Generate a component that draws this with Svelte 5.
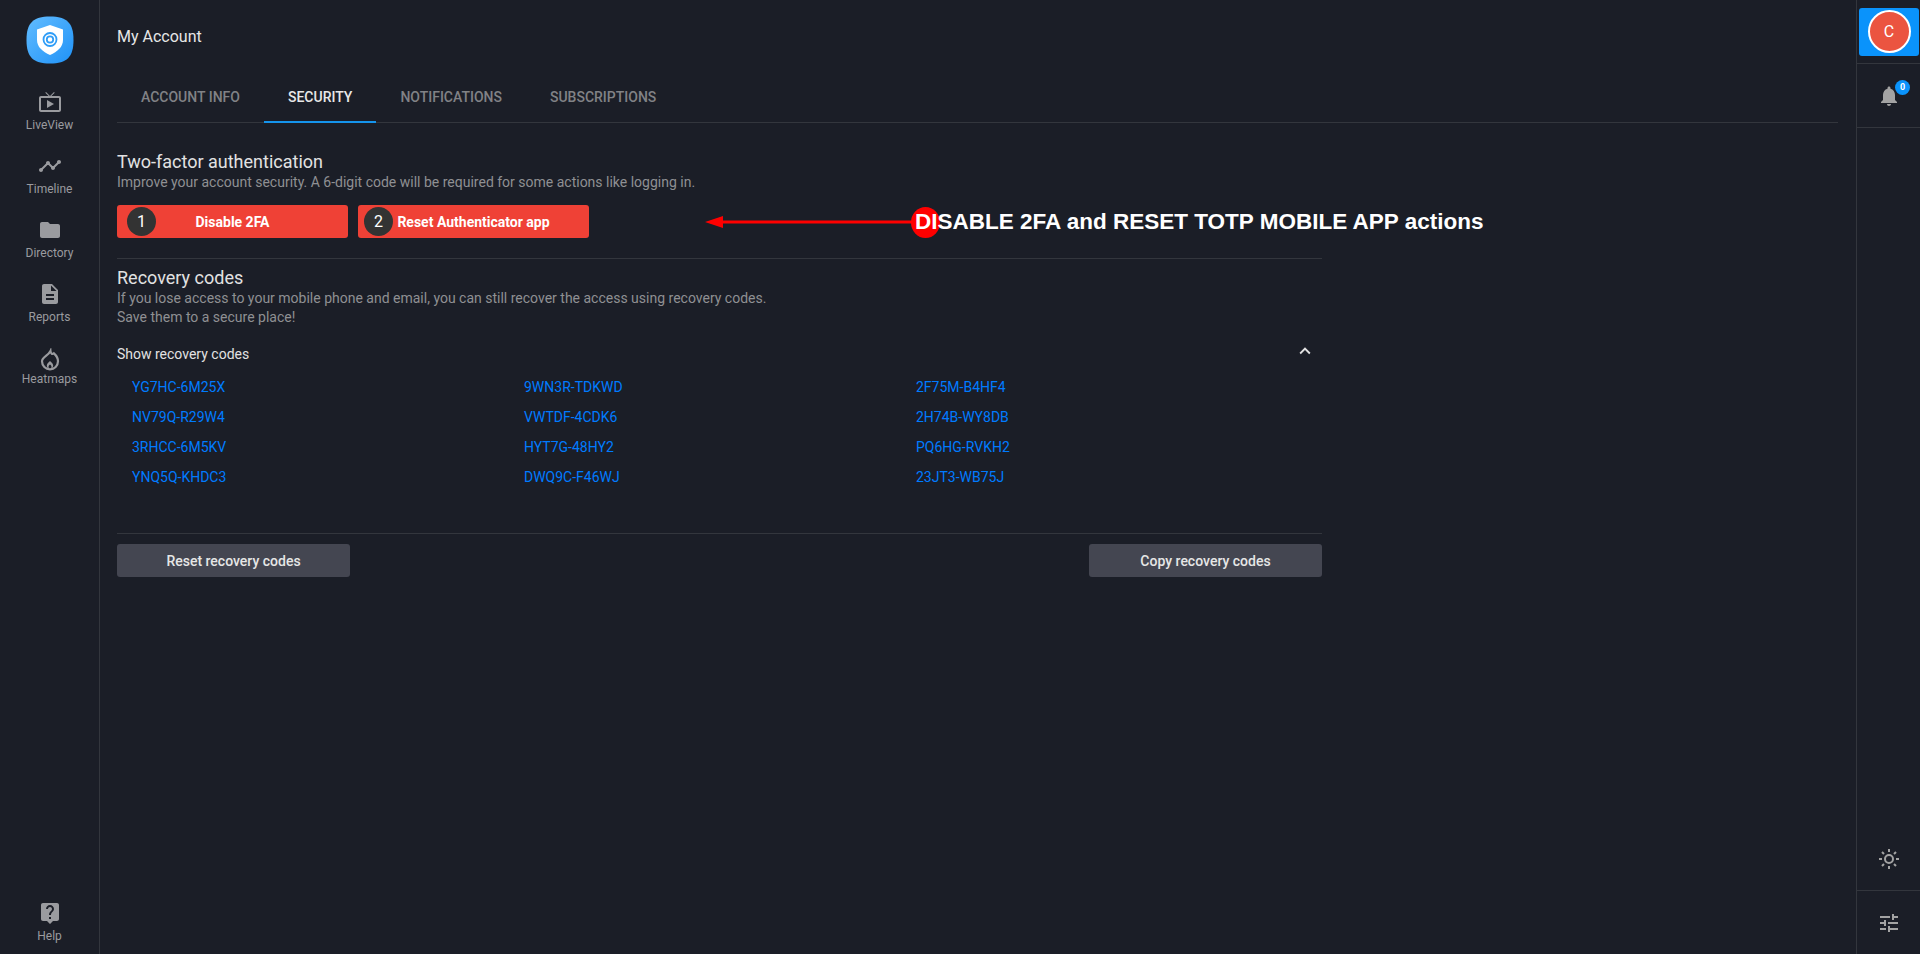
<script lang="ts">
    const nav = [
        { label: 'LiveView', d: 'M21 6h-7.59l3.29-3.29L16 2l-4 4-4-4-.71.71L10.59 6H3c-1.1 0-2 .89-2 2v12c0 1.1.9 2 2 2h18c1.1 0 2-.9 2-2V8c0-1.11-.9-2-2-2zm0 14H3V8h18v12zM9 10v8l7-4z' },
        { label: 'Timeline', d: 'M23 8c0 1.1-.9 2-2 2-.18 0-.35-.02-.51-.07l-3.56 3.55c.05.16.07.34.07.52 0 1.1-.9 2-2 2s-2-.9-2-2c0-.18.02-.36.07-.52l-2.55-2.55c-.16.05-.34.07-.52.07s-.36-.02-.52-.07l-4.55 4.56c.05.16.07.33.07.51 0 1.1-.9 2-2 2s-2-.9-2-2 .9-2 2-2c.18 0 .35.02.51.07l4.56-4.55C8.02 9.36 8 9.18 8 9c0-1.1.9-2 2-2s2 .9 2 2c0 .18-.02.36-.07.52l2.55 2.55c.16-.05.34-.07.52-.07s.36.02.52.07l3.55-3.56C19.02 8.35 19 8.18 19 8c0-1.1.9-2 2-2s2 .9 2 2z' },
        { label: 'Directory', d: 'M10 4H4c-1.1 0-1.99.9-1.99 2L2 18c0 1.1.9 2 2 2h16c1.1 0 2-.9 2-2V8c0-1.1-.9-2-2-2h-8l-2-2z' },
        { label: 'Reports', d: 'M14 2H6c-1.1 0-1.99.9-1.99 2L4 20c0 1.1.89 2 1.99 2H18c1.1 0 2-.9 2-2V8l-6-6zm2 16H8v-2h8v2zm0-4H8v-2h8v2zm-3-5V3.5L18.5 9H13z' },
    ]

    const codes = [
        'YG7HC-6M25X', '9WN3R-TDKWD', '2F75M-B4HF4',
        'NV79Q-R29W4', 'VWTDF-4CDK6', '2H74B-WY8DB',
        '3RHCC-6M5KV', 'HYT7G-48HY2', 'PQ6HG-RVKH2',
        'YNQ5Q-KHDC3', 'DWQ9C-F46WJ', '23JT3-WB75J',
    ]

    const tabs = ['Account info', 'Security', 'Notifications', 'Subscriptions']
    let active = $state('Security')
    let showCodes = $state(true)
</script>

<div class="page">
    <aside class="left">
        <div class="logo">
            <svg viewBox="0 0 48 48" width="48" height="48">
                <defs>
                    <linearGradient id="lg" x1="0" y1="0" x2="1" y2="1">
                        <stop offset="0" stop-color="#62bcff" />
                        <stop offset="1" stop-color="#1f92f7" />
                    </linearGradient>
                </defs>
                <path d="M24 .5C41 .5 47.500 7 47.500 24S41 47.500 24 47.500.5 41 .5 24 7 .5 24 .5z" fill="url(#lg)" />
                <path d="M24 9l13 4.500v10.500c0 7-5.500 11.500-13 15-7.500-3.500-13-8-13-15V13.500z" fill="#fff" />
                <circle cx="24" cy="23.500" r="6.500" fill="none" stroke="#2f9df7" stroke-width="1.800" />
                <circle cx="24" cy="23.500" r="3.200" fill="none" stroke="#2f9df7" stroke-width="1.800" />
            </svg>
        </div>
        <nav>
            {#each nav as item}
                <a class="nav-item" href="#top">
                    <span class="nav-icon">
                        <svg viewBox="0 0 24 24" width="24" height="24"><path d={item.d} /></svg>
                    </span>
                    <span>{item.label}</span>
                </a>
            {/each}
            <a class="nav-item heat" href="#top">
                <span class="nav-icon">
                    <svg viewBox="0 0 24 24" width="24" height="24">
                        <path class="line" d="M12.500 3c.3 2.800 1.900 3.700 3.400 2.300 2.500 2.200 4.100 5 4.100 8a8 8 0 0 1-16 0c0-4.400 6.300-5.600 8.500-10.300z" />
                        <path d="M12 13c1.900 1.500 3.200 3 3.200 4.600 0 .9-.3 1.700-.8 2.300h-1.200c.2-.4.3-.8.300-1.200 0-.9-.7-1.700-1.500-2.300-.8.600-1.500 1.400-1.500 2.300 0 .4.100.8.300 1.200H9.600c-.5-.6-.8-1.400-.8-2.300 0-1.600 1.300-3.100 3.200-4.600z" />
                    </svg>
                </span>
                <span>Heatmaps</span>
            </a>
        </nav>
        <a class="nav-item help" href="#top">
            <span class="nav-icon">
                <svg viewBox="0 0 24 24" width="24" height="24"><path d="M19 2H5c-1.110 0-2 .9-2 2v14c0 1.100.89 2 2 2h4l3 3 3-3h4c1.100 0 2-.9 2-2V4c0-1.100-.9-2-2-2zm-6 16h-2v-2h2v2zm2.070-7.750l-.9.92C13.450 11.900 13 12.500 13 14h-2v-.5c0-1.100.45-2.100 1.170-2.830l1.240-1.260c.37-.36.59-.86.59-1.410 0-1.100-.9-2-2-2s-2 .9-2 2H8c0-2.210 1.790-4 4-4s4 1.790 4 4c0 .88-.36 1.680-.93 2.250z" /></svg>
            </span>
            <span>Help</span>
        </a>
    </aside>

    <main>
        <h1>My Account</h1>

        <div class="tabs">
            {#each tabs as tab}
                <button class="tab" class:active={tab === active} onclick={() => (active = tab)}>{tab}</button>
            {/each}
        </div>

        <div class="content">
            <section class="twofa">
                <h2>Two-factor authentication</h2>
                <p>Improve your account security. A 6-digit code will be required for some actions like logging in.</p>
                <div class="actions">
                    <button class="danger">
                        <span class="step first">1</span>
                        Disable 2FA
                    </button>
                    <button class="danger">
                        <span class="step">2</span>
                        Reset Authenticator app
                    </button>
                </div>
            </section>

            <section class="recovery">
                <h2>Recovery codes</h2>
                <p>If you lose access to your mobile phone and email, you can still recover the access using recovery codes.<br />Save them to a secure place!</p>

                <button class="toggle" onclick={() => (showCodes = !showCodes)}>
                    <span>Show recovery codes</span>
                    <svg viewBox="0 0 24 24" width="22" height="22" class:flip={!showCodes}><path d="M7.410 15.410 12 10.830l4.590 4.580L18 14l-6-6-6 6z" /></svg>
                </button>

                {#if showCodes}
                    <div class="codes">
                        {#each codes as code}
                            <span>{code}</span>
                        {/each}
                    </div>
                {/if}
            </section>

            <div class="footer">
                <button class="neutral">Reset recovery codes</button>
                <button class="neutral">Copy recovery codes</button>
            </div>
        </div>

        <div class="note">
            <svg viewBox="0 0 210 14" width="210" height="14"><path d="M0 7 18 1v4.500h192v3H18V13z" /></svg>
            <span class="note-text"><span class="dot"></span>DISABLE 2FA and RESET TOTP MOBILE APP actions</span>
        </div>
    </main>

    <aside class="right">
        <div class="slot avatar-slot">
            <div class="avatar-bg"><span class="avatar">C</span></div>
        </div>
        <div class="slot bell">
            <svg viewBox="0 0 24 24" width="24" height="24"><path d="M12 22c1.100 0 2-.9 2-2h-4c0 1.100.89 2 2 2zm6-6v-5c0-3.070-1.640-5.640-4.500-6.320V4c0-.83-.67-1.500-1.500-1.500s-1.500.67-1.500 1.500v.68C7.630 5.360 6 7.920 6 11v5l-2 2v1h16v-1l-2-2z" /></svg>
            <span class="badge">0</span>
        </div>
        <div class="spacer"></div>
        <div class="slot sun">
            <svg viewBox="0 0 24 24" width="24" height="24">
                <circle cx="12" cy="12" r="4" />
                <path d="M12 2v3M12 19v3M2 12h3M19 12h3M5 5l2 2M17 17l2 2M5 19l2-2M17 7l2-2" />
            </svg>
        </div>
        <div class="slot tune">
            <svg viewBox="0 0 24 24" width="24" height="24"><path d="M3 17v2h6v-2H3zM3 5v2h10V5H3zm10 16v-2h8v-2h-8v-2h-2v6h2zM7 9v2H3v2h4v2h2V9H7zm14 4v-2H11v2h10zm-6-4h2V7h4V5h-4V3h-2v6z" /></svg>
        </div>
    </aside>
</div>

<style>
    :global(body) {
        background: #1b1e27;
        font-family: Roboto, "Liberation Sans", sans-serif;
    }

    button {
        font-family: inherit;
        border: 0;
        cursor: pointer;
    }

    .page {
        display: flex;
        height: 954px;
        overflow: hidden;
        background: #1b1e27;
    }

    .left {
        width: 99px;
        flex: none;
        border-right: 1px solid #33363d;
        display: flex;
        flex-direction: column;
        align-items: center;
        padding-top: 16px;
        box-sizing: content-box;
    }

    .logo {
        height: 48px;
        margin-bottom: 22px;
    }

    .logo svg {
        display: block;
    }

    nav {
        display: flex;
        flex-direction: column;
        flex: 1;
        width: 100%;
    }

    .nav-item {
        display: flex;
        flex-direction: column;
        align-items: center;
        height: 64px;
        color: #9a9b9f;
        font-size: 12px;
        line-height: 16px;
        text-decoration: none;
    }

    .nav-icon {
        height: 32px;
        display: flex;
        align-items: center;
        justify-content: center;
        margin-bottom: -1px;
    }

    .nav-icon svg {
        fill: #9a9b9f;
    }

    .nav-icon .line {
        fill: none;
        stroke: #9a9b9f;
        stroke-width: 2.200;
    }

    .heat {
        margin-top: 2px;
    }

    .heat .nav-icon {
        margin-bottom: -5px;
    }

    .help {
        height: 48px;
        margin-bottom: 9px;
    }

    main {
        flex: 1;
        min-width: 0;
        padding: 0 18px 0 17px;
        position: relative;
    }

    h1 {
        margin: 0;
        font-size: 16px;
        font-weight: 400;
        line-height: 19px;
        color: #e6e6e6;
        padding: 27px 0 17px;
    }

    .tabs {
        display: flex;
        border-bottom: 1px solid #33363d;
        height: 59px;
    }

    .tab {
        padding: 10px 24px 0;
        height: 60px;
        background: none;
        color: #818286;
        font-size: 14px;
        font-weight: 500;
        text-transform: uppercase;
        border-bottom: 2px solid transparent;
    }

    .tab.active {
        color: #e8e8e8;
        border-bottom-color: #1594ec;
    }

    .content {
        width: 1205px;
    }

    h2 {
        margin: 0;
        font-size: 18px;
        font-weight: 400;
        line-height: 22px;
        color: #e2e2e2;
    }

    p {
        margin: 0;
        font-size: 14px;
        line-height: 19px;
        color: #8f9093;
    }

    .twofa {
        padding: 28px 0 20px;
        border-bottom: 1px solid #33363d;
    }

    .twofa h2 {
        line-height: 21px;
    }

    .twofa p {
        line-height: 20px;
    }

    .actions {
        display: flex;
        gap: 10px;
        margin-top: 13px;
    }

    .danger {
        position: relative;
        width: 231px;
        height: 33px;
        border-radius: 3px;
        background: #ef4136;
        color: #fff;
        font-size: 14px;
        font-weight: 700;
        text-align: center;
        padding: 0;
    }

    .step {
        position: absolute;
        left: 6px;
        top: 2px;
        width: 29px;
        height: 29px;
        border-radius: 50%;
        background: #333333;
        color: #fff;
        font-size: 16px;
        font-weight: 400;
        line-height: 29px;
        text-align: center;
    }

    .step.first {
        left: 10px;
    }

    .recovery {
        padding-top: 8px;
        border-bottom: 1px solid #33363d;
        height: 266px;
    }

    .toggle {
        display: flex;
        width: 100%;
        justify-content: space-between;
        align-items: center;
        background: none;
        padding: 0 6px 0 0;
        margin-top: 15px;
        height: 24px;
        color: #e2e2e2;
        font-size: 14px;
    }

    .toggle svg {
        fill: #e2e2e2;
        margin-top: -6px;
    }

    .toggle svg.flip {
        transform: rotate(180deg);
    }

    .codes {
        display: grid;
        grid-template-columns: repeat(3, 392px);
        grid-auto-rows: 30px;
        padding: 6px 0 0 15px;
        color: #007bff;
        font-size: 14px;
        line-height: 30px;
    }

    .footer {
        display: flex;
        justify-content: space-between;
        margin-top: 10px;
    }

    .neutral {
        width: 233px;
        height: 33px;
        border-radius: 3px;
        background: #444651;
        color: #e6e6e6;
        font-size: 14px;
        font-weight: 500;
    }

    .note {
        position: absolute;
        left: 605px;
        top: 206px;
        display: flex;
        align-items: center;
        height: 31px;
    }

    .note svg {
        fill: #f00;
        margin-right: -3px;
    }

    .note-text {
        position: relative;
        isolation: isolate;
        margin-left: 3px;
        color: #fff;
        font-family: "Liberation Sans", Arial, sans-serif;
        font-size: 22.500px;
        font-weight: 700;
        white-space: nowrap;
    }

    .dot {
        position: absolute;
        left: -4px;
        top: -2px;
        width: 29px;
        height: 31px;
        border-radius: 50%;
        background: #f00;
        z-index: -1;
    }

    .right {
        width: 63px;
        flex: none;
        border-left: 1px solid #33363d;
        display: flex;
        flex-direction: column;
    }

    .slot {
        display: flex;
        align-items: center;
        justify-content: center;
        position: relative;
        flex: none;
    }

    .avatar-slot {
        height: 63px;
        border-bottom: 1px solid #33363d;
        justify-content: flex-end;
        padding-right: 1px;
    }

    .avatar-bg {
        width: 60px;
        height: 48px;
        border-radius: 3px;
        background: #0a93fb;
        display: flex;
        align-items: center;
        justify-content: center;
    }

    .avatar {
        width: 39px;
        height: 39px;
        border-radius: 50%;
        border: 2px solid #fff;
        background: #eb5440;
        color: #fff;
        font-size: 16px;
        line-height: 39px;
        text-align: center;
    }

    .bell {
        height: 63px;
        border-bottom: 1px solid #33363d;
    }

    .bell svg {
        fill: #a3a3a3;
    }

    .badge {
        position: absolute;
        left: 38px;
        top: 16px;
        width: 15px;
        height: 15px;
        border-radius: 50%;
        background: #0a93fb;
        color: #fff;
        font-size: 9px;
        font-weight: 700;
        line-height: 15px;
        text-align: center;
    }

    .spacer {
        flex: 1;
    }

    .sun {
        height: 62px;
        border-bottom: 1px solid #33363d;
    }

    .sun svg {
        fill: none;
        stroke: #a3a3a3;
        stroke-width: 2;
    }

    .tune {
        height: 63px;
    }

    .tune svg {
        fill: #a3a3a3;
    }
</style>
